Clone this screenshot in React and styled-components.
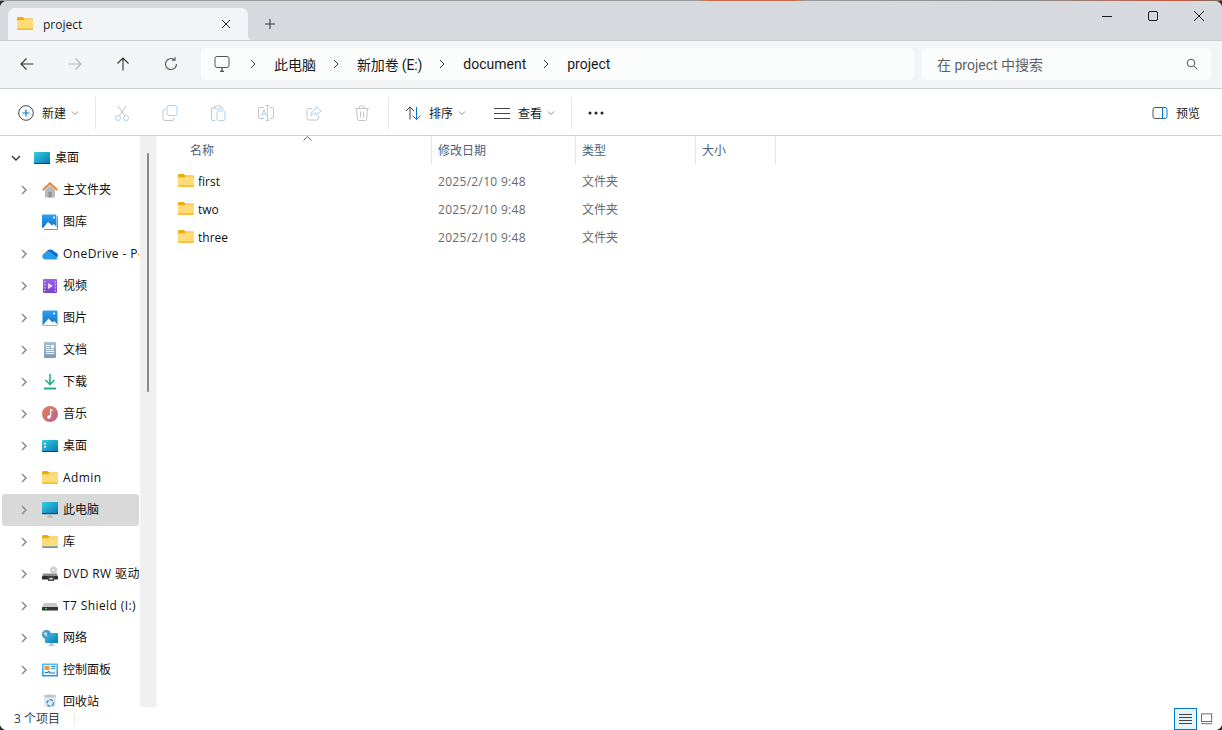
import React from 'react'
import styled, { createGlobalStyle } from 'styled-components'

const LATIN = '"Open Sans", "Noto Sans CJK SC", sans-serif'
const LATIN_14 = 'Roboto, "Noto Sans CJK SC", sans-serif'

const Global = createGlobalStyle`
  html, body { margin: 0; padding: 0; height: 100%; overflow: hidden; background: #3a3a3a; }
  #root { height: 100%; }
  * { box-sizing: border-box; }
`

const Desk = styled.div`
  height: 730px;
  padding-top: 1px;
  background: linear-gradient(90deg, #9b9b9b 0, #9b9b9b 57%, #c96a4a 58%, #c96a4a 65%, #9b9b9b 66%, #8a8a8a 85%, #c4573c 96%, #7c6a5c 100%) top / 100% 1px no-repeat, #2c2c2c;
`
const Win = styled.div`
  height: 729px;
  display: flex;
  flex-direction: column;
  background: #fff;
  border-radius: 7px;
  overflow: hidden;
  font-family: ${LATIN};
  color: #1a1a1a;
  font-size: 12px;
`

/* title bar */
const TitleBar = styled.div`
  height: 39px;
  flex: none;
  background: #d6d9dd;
  display: flex;
  padding: 7px 0 0 8px;
`
const Tab = styled.div`
  position: relative;
  width: 240px;
  height: 32px;
  background: #f2f4f7;
  border-radius: 7px 7px 0 0;
  display: flex;
  align-items: center;
  padding: 0 17px 0 9px;
  gap: 10px;
  &::after {
    content: '';
    position: absolute;
    right: -5px;
    bottom: 0;
    width: 5px;
    height: 5px;
    background: radial-gradient(circle at 100% 0, transparent 5px, #f2f4f7 5.5px);
  }
`
const TabName = styled.span`
  flex: 1;
  font-size: 12px;
  color: #1c1c1c;
`
const NewTab = styled.div`
  width: 44px;
  display: flex;
  align-items: center;
  justify-content: center;
  margin-bottom: 1px;
`
const WinBtns = styled.div`
  margin-left: auto;
  display: flex;
  height: 18px;
  margin-top: -1px;
`
const WinBtn = styled.div`
  width: 46px;
  display: flex;
  align-items: center;
  justify-content: center;
`

/* nav bar */
const NavBar = styled.div`
  height: 49px;
  flex: none;
  background: #f2f4f6;
  border-top: 1px solid #c9cbce;
  border-bottom: 1px solid #c9cbce;
  display: flex;
  align-items: center;
  padding: 0 11px 1px 3px;
`
const NavBtn = styled.div`
  width: 48px;
  height: 32px;
  flex: none;
  display: flex;
  align-items: center;
  justify-content: center;
`
const Address = styled.div`
  width: 713px;
  height: 32px;
  margin: 0 8px 0 6px;
  background: #fbfcfc;
  border-radius: 4px;
  display: flex;
  align-items: center;
  padding-left: 13px;
  font-family: ${LATIN_14};
  font-size: 14px;
`
const PcSlot = styled.div`
  width: 19px;
  display: flex;
`
const CrumbSep = styled.div`
  width: 41px;
  display: flex;
  justify-content: center;
  padding-right: 2px;
`
const Crumb = styled.span`
  letter-spacing: ${p => (p.$tight ? -0.15 : 0)}px;
`
const Search = styled.div`
  flex: 1;
  height: 32px;
  background: #fbfcfc;
  border-radius: 4px;
  display: flex;
  align-items: center;
  justify-content: space-between;
  padding: 0 13px 0 15px;
  font-family: ${LATIN_14};
  font-size: 14px;
  color: #5f5f5f;
`

/* command bar */
const CmdBar = styled.div`
  height: 47px;
  flex: none;
  background: #fff;
  border-bottom: 1px solid #ccd0d5;
  display: flex;
  align-items: center;
  padding: 2px 0 0 18px;
`
const CmdLabel = styled.div`
  display: flex;
  align-items: center;
  gap: 8px;
  width: ${p => p.$w}px;
  flex: none;
`
const Caret = styled.svg`
  width: 8px;
  height: 6px;
  margin-left: -3px;
`
const Divider = styled.div`
  width: 1px;
  height: 32px;
  background: #e6e6e6;
  flex: none;
  margin: ${p => p.$m};
`
const CmdIcon = styled.div`
  width: 48px;
  flex: none;
  display: flex;
  justify-content: center;
`
const Preview = styled.div`
  margin-left: auto;
  margin-right: 22px;
  display: flex;
  align-items: center;
  gap: 8px;
`

/* main */
const Main = styled.div`
  flex: 1;
  min-height: 0;
  display: flex;
`
const Side = styled.div`
  width: 140px;
  flex: none;
  padding: 6px 1px 0 2px;
  overflow: hidden;
`
const SideRow = styled.div`
  height: 32px;
  display: flex;
  align-items: center;
  padding: 0 0 2px ${p => (p.$top ? 9 : 17)}px;
  border-radius: 3px;
  background: ${p => (p.$active ? '#d9d9d9' : 'transparent')};
  white-space: nowrap;
  overflow: hidden;
  color: #111;
`
const Arrow = styled.div`
  width: 15px;
  flex: none;
  display: flex;
  margin-top: 2px;
`
const SideIcon = styled.div`
  width: 16px;
  height: 16px;
  flex: none;
  margin: 2px 5px 0 8px;
  display: flex;
`
const SideName = styled.span`
  letter-spacing: ${p => (p.$latin ? 0.4 : 0)}px;
`
const Track = styled.div`
  width: 16px;
  flex: none;
  background: #f0f0f0;
  padding: 17px 0 0 7px;
`
const Thumb = styled.div`
  width: 2px;
  height: 239px;
  background: #8a8a8a;
  border-radius: 1px;
`
const Content = styled.div`
  flex: 1;
  border-left: 2px solid #fafafa;
`
const Columns = styled.div`
  display: grid;
  grid-template-columns: 274px 144px 120px 80px;
  justify-content: start;
`
const Header = styled(Columns)`
  height: 28px;
  margin-bottom: 3px;
  position: relative;
  color: #4c607a;
`
const HeadCell = styled.div`
  display: flex;
  align-items: center;
  padding: 0 0 0 ${p => p.$pad || 6}px;
  border-right: 1px solid #e5e5e5;
`
const SortMark = styled.svg`
  position: absolute;
  left: 145px;
  top: 0;
  width: 9px;
  height: 5px;
`
const FileRow = styled(Columns)`
  height: 28px;
  align-items: center;
  color: #6a6a6a;
`
const NameCell = styled.div`
  display: flex;
  align-items: center;
  gap: 4px;
  padding-left: 20px;
  color: #111;
`
const Cell = styled.div`
  padding-left: 6px;
`
const DateCell = styled(Cell)`
  letter-spacing: 0.3px;
`

/* status bar */
const Status = styled.div`
  height: 23px;
  flex: none;
  background: #fff;
  display: flex;
  align-items: center;
  padding-left: 14px;
  color: #3f3f3f;
`
const StatusText = styled.span`
  position: relative;
  top: -1px;
`
const StatusSep = styled.div`
  width: 1px;
  height: 12px;
  background: #ececec;
  margin-left: 14px;
`
const ViewBtns = styled.div`
  margin-left: auto;
  margin-right: 8px;
  display: flex;
  align-items: center;
  gap: 3px;
  height: 100%;
`
const ViewBtn = styled.div`
  width: ${p => (p.$on ? 23 : 14)}px;
  height: 22px;
  display: flex;
  align-items: center;
  justify-content: center;
  border: 1px solid ${p => (p.$on ? '#0078d4' : 'transparent')};
  background: ${p => (p.$on ? '#e5f3fb' : 'transparent')};
`

const Ico = ({ s = 16, h, children, ...rest }) => (
  <svg width={s} height={h || s} viewBox={`0 0 ${s} ${h || s}`} fill="none" {...rest}>{children}</svg>
)

const Folder = ({ lib }) => (
  <Ico>
    <g transform="translate(0 -1)">
      <path d="M0 3.500C0 2.700.6 2 1.400 2h3.800c.4 0 .7.1 1 .4L7.600 3.600H14.600c.8 0 1.400.6 1.400 1.400v2H0z" fill="#f0aa0c" />
      <path d="M0 5.200h6.400l1.400-1h6.800c.8 0 1.400.6 1.400 1.400v7.800c0 .8-.6 1.400-1.400 1.400H1.400C.6 14.800 0 14.200 0 13.400z" fill="#ffdb7a" />
      <path d="M0 13.600h16v-.2c0 .8-.6 1.400-1.400 1.400H1.400C.6 14.800 0 14.200 0 13.400z" fill={lib ? '#1f7fd1' : '#f2b312'} />
    </g>
  </Ico>
)
const Chevron = ({ dir = 'right', c = '#8c8c8c' }) => (
  <Ico s={10}>
    <path d={dir === 'down' ? 'M1 3l4 4 4-4' : 'M3 1l4 4-4 4'} stroke={c} strokeWidth={dir === 'down' ? 1.4 : 1.5} />
  </Ico>
)
const CrumbChevron = () => (
  <Ico s={10}><path d="M3 1l4 4-4 4" stroke="#3d3d3d" strokeWidth="1" /></Ico>
)
const SmallCaret = () => (
  <Caret viewBox="0 0 8 6"><path d="M1 1.500l3 3 3-3" stroke="#8a8a8a" fill="none" /></Caret>
)
const NavArrow = ({ c, d }) => (
  <Ico><path d={d} stroke={c} strokeWidth="1.100" /></Ico>
)
const Monitor = () => (
  <Ico>
    <rect x="1" y=".5" width="14" height="11" rx="2" stroke="#555" />
    <path d="M6 15.500h4M8 12v3.500" stroke="#555" strokeWidth="1.400" />
  </Ico>
)

const Grad = ({ id, a, b, x2 = 0, y2 = 1 }) => (
  <defs>
    <linearGradient id={id} x1="0" y1="0" x2={x2} y2={y2}>
      <stop offset="0" stopColor={a} />
      <stop offset="1" stopColor={b} />
    </linearGradient>
  </defs>
)
const Teal = ({ id }) => <Grad id={id} a="#35cfe0" b="#0b74b8" x2={1} />

const DesktopIcon = ({ id, dots }) => (
  <Ico>
    <Teal id={id} />
    <rect y="2" width="16" height="12" rx="1" fill={`url(#${id})`} />
    <rect y="13" width="16" height="1" fill="#0a3f6e" />
    {dots && <path d="M2 5h2v1.500H2zM2 8h2v1.500H2z" fill="#fff" />}
  </Ico>
)
const HomeIcon = () => (
  <Ico>
    <path d="M3 8l5-5 5 5v7.500H3z" fill="#b9b9b9" />
    <rect x="6.500" y="10" width="3" height="5.500" fill="#8f8f8f" />
    <path d="M.8 8.200L8 1.200l7.200 7" stroke="#e8761b" strokeWidth="1.800" />
  </Ico>
)
const PhotoIcon = ({ id, stack }) => (
  <Ico>
    <Grad id={id} a="#2f9ff0" b="#1273c8" />
    <rect x={stack ? 0 : .5} y=".5" width={stack ? 14.5 : 15} height={stack ? 13.5 : 15} rx="1.200" fill={`url(#${id})`} />
    <path d={stack ? 'M1 14l5-6 4 3.500 2-1.500 2.500 3V14z' : 'M1 15l5.500-6.500 4 4 2-1.500 2.500 3v1z'} fill="#fff" />
    <circle cx="12" cy="3.500" r="1" fill="#fff" />
    {stack && <path d="M15.500 2.500V15.500H2" stroke="#5f9bd6" />}
  </Ico>
)
const CloudIcon = () => (
  <Ico>
    <path d="M4 7.500A4.500 4.500 0 0 1 12.500 6a3.500 3.500 0 0 1 3 5H5z" fill="#0e6cc4" />
    <path d="M3.500 13.500a3.300 3.300 0 0 1-.6-6.500 3.500 3.500 0 0 1 5.600-.9l7 6a2 2 0 0 1-1.500 1.400z" fill="#2a9be8" />
  </Ico>
)
const VideoIcon = ({ id }) => (
  <Ico>
    <Grad id={id} a="#9a62e6" b="#7a42c8" />
    <rect x="1" y="1" width="14" height="14" rx="1" fill={`url(#${id})`} />
    <path d="M6 5l5 3-5 3z" fill="#e6d8ff" />
    <path d="M2 3h1.500v1.500H2zM2 6h1.500v1.500H2zM2 9h1.500v1.500H2zM2 12h1.500v1.500H2zM12.500 3H14v1.500h-1.500zM12.500 6H14v1.500h-1.500zM12.500 9H14v1.500h-1.500zM12.500 12H14v1.500h-1.500z" fill="#c9b3f2" />
  </Ico>
)
const DocIcon = ({ id }) => (
  <Ico>
    <Grad id={id} a="#a8bdd2" b="#7f9ab6" />
    <rect x="2" y="0" width="12" height="16" rx="1" fill={`url(#${id})`} />
    <path d="M4 3.500h4M4 5.500h4M4 7.500h8M4 9.500h8M4 11.500h8" stroke="#fff" />
    <rect x="9" y="3" width="3" height="3" fill="#fff" />
  </Ico>
)
const DownloadIcon = () => (
  <Ico>
    <path d="M8 0v10M3.500 6l4.500 4.500L12.500 6" stroke="#22b08c" strokeWidth="1.600" />
    <path d="M2 14.500h12" stroke="#22b08c" strokeWidth="1.800" />
  </Ico>
)
const MusicIcon = ({ id }) => (
  <Ico>
    <Grad id={id} a="#ea8049" b="#b4609f" x2={1} />
    <circle cx="8" cy="8" r="8" fill={`url(#${id})`} />
    <path d="M8.600 3.500V10.500" stroke="#fff" strokeWidth="1.300" />
    <path d="M8.600 3.500l2.500 1" stroke="#fff" strokeWidth="1.300" />
    <circle cx="7" cy="11" r="1.800" fill="#fff" />
  </Ico>
)
const PcIcon = ({ id }) => (
  <Ico>
    <Teal id={id} />
    <rect y="0" width="16" height="12" rx="1" fill={`url(#${id})`} />
    <rect y="11" width="16" height="1.200" fill="#0a4a78" />
    <path d="M7 12h2v2.500H7zM5 14.500h6v1H5z" fill="#a7b4bd" />
  </Ico>
)
const DvdIcon = () => (
  <Ico>
    <circle cx="11.500" cy="4" r="3.500" fill="#c9ced3" />
    <circle cx="11.500" cy="4" r="1" fill="#fff" />
    <path d="M1 7.500h14l.6 2.500H.4z" fill="#8b8b8b" />
    <rect x="0" y="10" width="16" height="3.500" rx=".5" fill="#2f2f2f" />
    <rect x="6" y="10.500" width="6" height="4.500" fill="#4c4c4c" />
    <rect x="7.500" y="12" width="3" height="1.500" fill="#ddd" />
  </Ico>
)
const DriveIcon = () => (
  <Ico>
    <path d="M2 5h12l2 4H0z" fill="#c8c8c8" />
    <rect y="9" width="16" height="3.500" rx=".6" fill="#333" />
    <rect x="3" y="10" width="2" height="1.200" fill="#4fc36e" />
  </Ico>
)
const NetIcon = ({ id }) => (
  <Ico>
    <Teal id={id} />
    <rect x="3" y="3" width="13" height="10" rx="1" fill={`url(#${id})`} />
    <path d="M8.500 13h2v1.800h-2zM6.500 14.800h6v1h-6z" fill="#a7b4bd" />
    <circle cx="4.500" cy="4.500" r="4.500" fill="#3e9bd4" />
    <path d="M1.500 3.500l2-1.500 2 1-1 2 1.500 2-2.500-1z" fill="#bfe4c8" />
  </Ico>
)
const PanelIcon = ({ id }) => (
  <Ico>
    <Grad id={id} a="#4fc0f0" b="#2f93dc" />
    <rect y="1.500" width="16" height="13" rx=".6" fill={`url(#${id})`} />
    <rect x="1.500" y="3" width="13" height="10" fill="#eaf6fd" />
    <path d="M2.500 4h5v4h-5z" fill="#f0973a" />
    <path d="M9 4.500h4.500M9 6.500h4" stroke="#2f93dc" />
    <path d="M2.500 10.500h3l1.500-1 1 1.500h5" stroke="#2f73c0" strokeWidth="1.200" />
  </Ico>
)
const BinIcon = () => (
  <Ico>
    <path d="M2.500 1.500h11L12.500 15.500h-9z" fill="#e9edf0" stroke="#c5cbd0" strokeWidth=".6" />
    <ellipse cx="8" cy="2" rx="5.500" ry="1.500" fill="#bcc3c9" />
    <circle cx="8.200" cy="9" r="3.200" stroke="#2e95dc" strokeWidth="1.500" strokeDasharray="3.500 1.200" />
  </Ico>
)

const items = [
  { name: '桌面', icon: <DesktopIcon id="d1" />, top: true },
  { name: '主文件夹', icon: <HomeIcon /> },
  { name: '图库', icon: <PhotoIcon id="g1" stack />, noArrow: true },
  { name: 'OneDrive - Personal', icon: <CloudIcon />, latin: true },
  { name: '视频', icon: <VideoIcon id="v1" /> },
  { name: '图片', icon: <PhotoIcon id="p1" /> },
  { name: '文档', icon: <DocIcon id="doc1" /> },
  { name: '下载', icon: <DownloadIcon /> },
  { name: '音乐', icon: <MusicIcon id="m1" /> },
  { name: '桌面', icon: <DesktopIcon id="d2" dots /> },
  { name: 'Admin', icon: <Folder />, latin: true },
  { name: '此电脑', icon: <PcIcon id="pc1" />, active: true },
  { name: '库', icon: <Folder lib /> },
  { name: 'DVD RW 驱动器 (H:)', icon: <DvdIcon />, latin: true },
  { name: 'T7 Shield (I:)', icon: <DriveIcon />, latin: true },
  { name: '网络', icon: <NetIcon id="n1" /> },
  { name: '控制面板', icon: <PanelIcon id="c1" /> },
  { name: '回收站', icon: <BinIcon />, noArrow: true },
]

const files = ['first', 'two', 'three']
const crumbs = ['此电脑', '新加卷 (E:)', 'document', 'project']

const GRAY = '#c4c4c4'
const BLUE = '#a9d2f2'

export default function App() {
  return (
    <Desk>
      <Global />
      <Win>
        <TitleBar>
          <Tab>
            <Folder />
            <TabName>project</TabName>
            <Ico s={10}><path d="M1 1l8 8M9 1l-8 8" stroke="#333" /></Ico>
          </Tab>
          <NewTab>
            <Ico s={12}><path d="M6 1v10M1 6h10" stroke="#333" /></Ico>
          </NewTab>
          <WinBtns>
            <WinBtn><Ico s={10}><path d="M0 5.500h10" stroke="#1a1a1a" /></Ico></WinBtn>
            <WinBtn><Ico s={10}><rect x=".5" y=".5" width="9" height="9" rx="1.500" stroke="#1a1a1a" /></Ico></WinBtn>
            <WinBtn><Ico s={10}><path d="M0 0l10 10M10 0L0 10" stroke="#1a1a1a" /></Ico></WinBtn>
          </WinBtns>
        </TitleBar>

        <NavBar>
          <NavBtn><NavArrow c="#333" d="M14.500 8H2M7.500 2.500L2 8l5.500 5.500" /></NavBtn>
          <NavBtn><NavArrow c="#b4b4b4" d="M1.500 8H14M8.500 2.500L14 8l-5.500 5.500" /></NavBtn>
          <NavBtn><NavArrow c="#333" d="M8 14.500V2M2.500 7.500L8 2l5.500 5.500" /></NavBtn>
          <NavBtn><NavArrow c="#555" d="M13.500 8A5.500 5.500 0 1 1 11.500 3.800M12 1v3.200H8.800" /></NavBtn>
          <Address>
            <PcSlot><Monitor /></PcSlot>
            {crumbs.map(c => (
              <React.Fragment key={c}>
                <CrumbSep><CrumbChevron /></CrumbSep>
                <Crumb $tight={c.includes('(')}>{c}</Crumb>
              </React.Fragment>
            ))}
          </Address>
          <Search>
            <span>在 project 中搜索</span>
            <Ico s={12}><circle cx="5" cy="5" r="3.800" stroke="#555" /><path d="M8 8l3.500 3.500" stroke="#555" /></Ico>
          </Search>
        </NavBar>

        <CmdBar>
          <CmdLabel $w={77}>
            <Ico>
              <circle cx="8" cy="8" r="7.300" stroke="#444" />
              <path d="M8 4.500v7M4.500 8h7" stroke="#0078d4" strokeWidth="1.200" />
            </Ico>
            <span>新建</span>
            <SmallCaret />
          </CmdLabel>
          <Divider $m="0 2px 0 0" />
          <CmdIcon>
            <Ico>
              <path d="M4 1l6.500 9.500M12 1L5.500 10.500" stroke={GRAY} />
              <circle cx="4" cy="13" r="2.500" stroke={BLUE} />
              <circle cx="12" cy="13" r="2.500" stroke={BLUE} />
            </Ico>
          </CmdIcon>
          <CmdIcon>
            <Ico>
              <rect x="5" y=".5" width="10" height="10" rx="2" stroke={BLUE} />
              <path d="M3.500 4H3a2 2 0 0 0-2 2v7.500a2 2 0 0 0 2 2h7a2 2 0 0 0 2-2V12.500" stroke={GRAY} />
            </Ico>
          </CmdIcon>
          <CmdIcon>
            <Ico>
              <path d="M5 2.500H3a1.500 1.500 0 0 0-1.500 1.500v10a1.500 1.500 0 0 0 1.500 1.500h2M11 2.500h.5A1.500 1.500 0 0 1 13 4v1" stroke={GRAY} />
              <rect x="5" y="1" width="6" height="3" rx="1" stroke={GRAY} />
              <rect x="7" y="6" width="8" height="9.500" rx="1.500" stroke={BLUE} />
            </Ico>
          </CmdIcon>
          <CmdIcon>
            <Ico>
              <path d="M6 2.500H2a1.500 1.500 0 0 0-1.500 1.500v8A1.500 1.500 0 0 0 2 13.500h4M12 2.500h2A1.500 1.500 0 0 1 15.500 4v8a1.500 1.500 0 0 1-1.500 1.500h-2" stroke={GRAY} />
              <path d="M9.500 1v14M7.500 .5h4M7.500 15.500h4" stroke={BLUE} />
              <path d="M3.500 11l2.500-6.500L8.500 11M4.500 9h3" stroke={BLUE} />
            </Ico>
          </CmdIcon>
          <CmdIcon>
            <Ico>
              <path d="M6 3.500H3a2 2 0 0 0-2 2v7.500a2 2 0 0 0 2 2h7.500a2 2 0 0 0 2-2v-2" stroke={GRAY} />
              <path d="M10 1.500l5 4.500-5 4.500V8C7.500 8 6 9 5 11c0-3.500 1.500-6.500 5-7z" stroke={BLUE} />
            </Ico>
          </CmdIcon>
          <CmdIcon>
            <Ico>
              <path d="M1 3.500h14M5.500 3.500V2a1 1 0 0 1 1-1h3a1 1 0 0 1 1 1v1.500M2.500 3.500l1 11a1 1 0 0 0 1 1h7a1 1 0 0 0 1-1l1-11M6.500 6.500v6M9.500 6.500v6" stroke={GRAY} />
            </Ico>
          </CmdIcon>
          <Divider $m="0 16px 0 2px" />
          <CmdLabel $w={89}>
            <Ico>
              <path d="M5 14.500V2M1 6l4-4 4 4" stroke="#444" />
              <path d="M11.500 2v12.500M7.500 10.500l4 4 4-4" stroke="#0078d4" />
            </Ico>
            <span>排序</span>
            <SmallCaret />
          </CmdLabel>
          <CmdLabel $w={77}>
            <Ico><path d="M0 3.500h16M0 8.500h16M0 13.500h16" stroke="#444" /></Ico>
            <span>查看</span>
            <SmallCaret />
          </CmdLabel>
          <Divider $m="0 16px 0 0" />
          <Ico><circle cx="2" cy="8" r="1.500" fill="#222" /><circle cx="8" cy="8" r="1.500" fill="#222" /><circle cx="14" cy="8" r="1.500" fill="#222" /></Ico>
          <Preview>
            <Ico>
              <path d="M10.500 2.500H3a2 2 0 0 0-2 2v7a2 2 0 0 0 2 2h7.500" stroke="#555" />
              <path d="M10.500 2.500H13a2 2 0 0 1 2 2v7a2 2 0 0 1-2 2h-2.500zM10.500 2.500v11" stroke="#0078d4" />
            </Ico>
            <span>预览</span>
          </Preview>
        </CmdBar>

        <Main>
          <Side>
            {items.map((it, i) => (
              <SideRow key={i} $top={it.top} $active={it.active}>
                <Arrow>
                  {!it.noArrow && (it.top
                    ? <Chevron dir="down" c="#333" />
                    : <Chevron />)}
                </Arrow>
                <SideIcon>{it.icon}</SideIcon>
                <SideName $latin={it.latin}>{it.name}</SideName>
              </SideRow>
            ))}
          </Side>
          <Track><Thumb /></Track>
          <Content>
            <Header>
              <SortMark viewBox="0 0 9 5"><path d="M.5 4.500l4-4 4 4" stroke="#666" fill="none" /></SortMark>
              <HeadCell $pad={32}>名称</HeadCell>
              <HeadCell>修改日期</HeadCell>
              <HeadCell>类型</HeadCell>
              <HeadCell>大小</HeadCell>
            </Header>
            {files.map(f => (
              <FileRow key={f}>
                <NameCell><Folder /><span>{f}</span></NameCell>
                <DateCell>2025/2/10 9:48</DateCell>
                <Cell>文件夹</Cell>
                <Cell />
              </FileRow>
            ))}
          </Content>
        </Main>

        <Status>
          <StatusText>3 个项目</StatusText>
          <StatusSep />
          <ViewBtns>
            <ViewBtn $on>
              <Ico s={13} h={12}><path d="M0 1.500h13M0 4.500h13M0 7.500h13M0 10.500h13" stroke="#444" /></Ico>
            </ViewBtn>
            <ViewBtn>
              <Ico s={14}><rect x=".5" y="1" width="12" height="9" stroke="#555" /><path d="M0 12.500h13" stroke="#555" /></Ico>
            </ViewBtn>
          </ViewBtns>
        </Status>
      </Win>
    </Desk>
  )
}
